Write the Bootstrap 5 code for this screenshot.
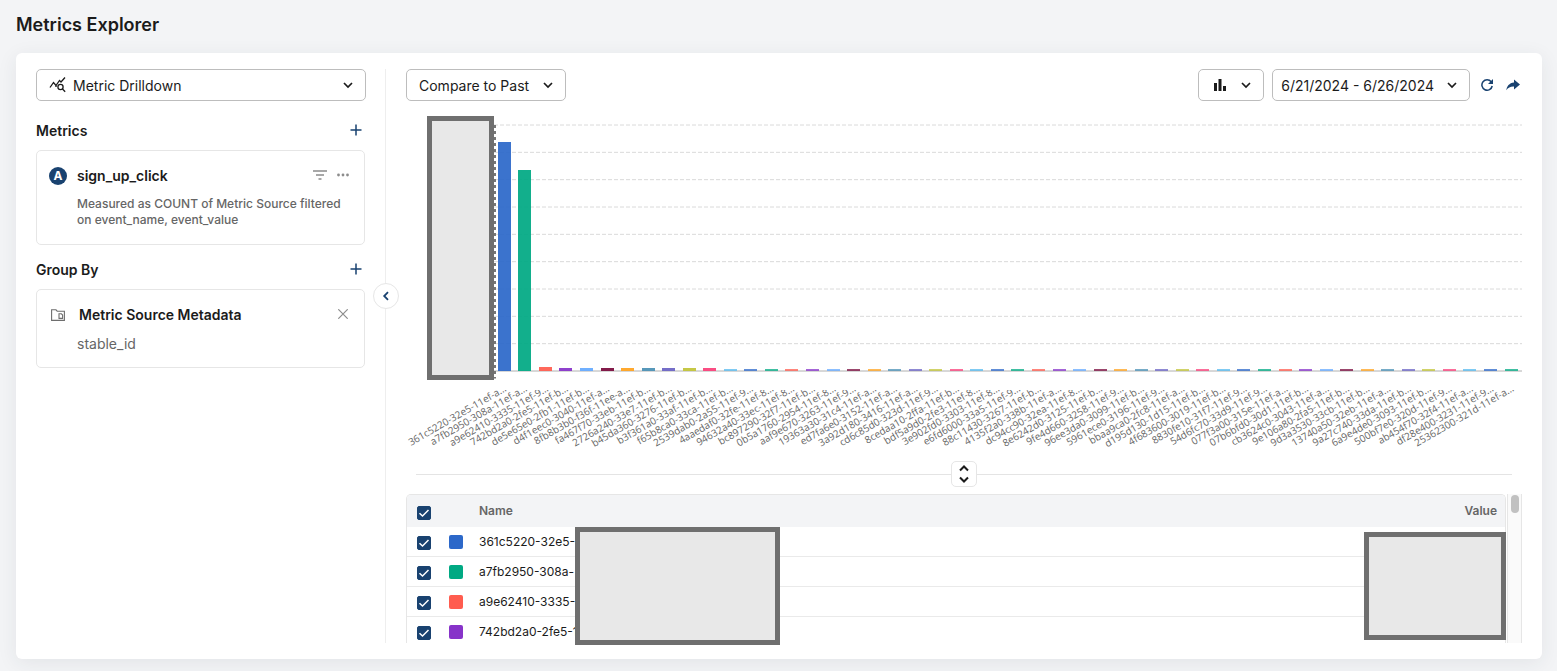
<!DOCTYPE html>
<html lang="en">
<head>
<meta charset="utf-8">
<meta name="viewport" content="width=device-width, initial-scale=1">
<title>Metrics Explorer</title>
<link rel="stylesheet" href="https://cdn.jsdelivr.net/npm/bootstrap@5.3.0/dist/css/bootstrap.min.css">
<style>
  body { font-family: Inter, "Liberation Sans", sans-serif; font-size: 14px; line-height: 20px; color: #1b1b1b; background: #f3f4f6; }
  .page { padding: 13px 15px 12px 16px; }
  .page-title { font-size: 18px; line-height: 24px; font-weight: 600; margin-bottom: 16px; }
  .panel { background: #fff; border-radius: 6px; padding: 16px 20px; box-shadow: 0 4px 20px rgba(40, 50, 60, .08); }
  .sidebar { width: 350px; padding-right: 19px; border-right: 1px solid #eee; flex: none; }
  .main { padding-left: 20px; min-width: 0; }
  .control { height: 32px; padding: 0 11px 0 12px; border: 1px solid #bdbdbd; border-radius: 5px; background: #fff; color: #1b1b1b; font-size: 14px; line-height: 20px; }
  .control svg, .icon-btn svg, .group svg { display: block; flex: none; }
  .control select { appearance: none; border: 0; background: transparent; color: inherit; font: inherit; padding: 2px 0 0; outline: 0; }
  .control span { padding-top: 2px; }
  .view-control { gap: 6px; }
  .compare-control { gap: 12px; }
  .type-control { gap: 14px; padding-left: 15px; }
  .date-control { gap: 12px; padding-left: 8px; }
  .toolbar-icons { gap: 13px; margin: 0 2px 0 3px; }
  .icon-btn { border: 0; background: none; padding: 0; color: #194270; line-height: 0; }
  .icon-btn.muted { color: #8c8c8c; }
  .section-title { font-size: 14px; line-height: 20px; font-weight: 600; margin: 0; }
  .section-row { padding-right: 4px; margin: 20px 0 9px; }
  .group + .section-row { margin-top: 15px; }
  .section-row .icon-btn, .group .icon-btn { padding-bottom: 2px; }
  .group { border: 1px solid #e6e6e6; border-radius: 5px; padding: 15px 12px 16px; margin-right: 1px; }
  .group-compact { padding-bottom: 13px; }
  .group-head { gap: 10px; padding-right: 3px; }
  .group-compact .group-head { gap: 14px; padding: 0 4px 0 2px; }
  .group-title { font-size: 14px; font-weight: 600; }
  .tag { width: 18px; height: 18px; border-radius: 50%; background: #194270; color: #fff; font-size: 12px; line-height: 18px; font-weight: 700; text-align: center; }
  .descr { font-size: 12px; line-height: 16px; font-weight: 500; color: #666; padding-left: 28px; margin: 10px 0 0; }
  .stable { line-height: 20px; color: #666; padding-left: 28px; margin-top: 9px; }
  .collapse-btn { position: absolute; right: -14px; top: 214px; width: 26px; height: 26px; border: 1px solid #e6e6e6; border-radius: 50%; background: #fff; color: #194270; padding: 0; }
  .redacted { background: #e8e8e8; border: 5px solid #6f6f6f; }
  .chart { margin: 15px 0 0 21px; }
  .axis-box { width: 67px; height: 264px; flex: none; }
  .plot-wrap { padding-top: 9px; min-width: 0; }
  .plot { height: 246px; position: relative; }
  .plot svg { position: absolute; inset: 0; width: 100%; height: 100%; overflow: visible; }
  .bars { position: relative; height: 100%; padding-right: 1px; }
  .slot { flex: 1 1 0; min-width: 0; }
  .bar { width: 13px; opacity: .93; }
  .bar.faint { opacity: .75; }
  .labels { height: 83px; margin-top: 19px; padding-right: 1px; clip-path: inset(0 0 0 -110px); }
  .labels .slot { position: relative; }
  .labels span { position: absolute; right: 9px; top: -9px; white-space: nowrap; font-family: "Open Sans", "Noto Sans", sans-serif; font-size: 10px; line-height: 12px; color: #666; transform: rotate(-30deg); transform-origin: 100% 50%; }
  .splitter { height: 26px; margin: -12px 10px 0; }
  .splitter::before, .splitter::after { content: ""; flex: 1; height: 1px; background: #e4e4e4; }
  .split-btn { width: 26px; height: 26px; border: 1px solid #e6e6e6; border-radius: 5px; background: #fff; padding: 0; color: #1b1b1b; }
  .split-btn svg, .collapse-btn svg { display: block; margin: auto; }
  .results { margin-top: 7px; }
  .scroll-area { height: 149px; overflow: hidden; border: 1px solid #e6e6e6; border-bottom: 0; border-radius: 5px 5px 0 0; }
  .data-grid { width: 100%; font-size: 12px; line-height: 16px; table-layout: fixed; border-collapse: separate; border-spacing: 0; }
  .data-grid th { height: 32px; background: #f3f4f6; color: #666; font-weight: 600; padding: 0; }
  .data-grid td { height: 30px; padding: 0; border-bottom: 1px solid #eaeaea; }
  .data-grid th:first-child, .data-grid td:first-child { padding-left: 10px; }
  .col-tick { width: 42px; }
  .col-swatch { width: 30px; }
  .col-value { width: 150px; }
  .tick { appearance: none; display: block; width: 14px; height: 14px; margin: 2px 0 0; border-radius: 2px; border: 1px solid #194270; background: #194270 url("data:image/svg+xml,%3Csvg xmlns='http://www.w3.org/2000/svg' viewBox='0 0 12 12'%3E%3Cpath d='M1.5 6.2 4.5 9 10.5 3' fill='none' stroke='white' stroke-width='1.5'/%3E%3C/svg%3E") center/12px; }
  th .tick { margin-top: 4px; }
  .swatch { width: 14px; height: 14px; border-radius: 2px; }
  .track { width: 15px; margin-left: 1px; border: solid #e6e6e6; border-width: 0 1px; background: #fafafa; flex: none; padding: 1px 3px; }
  .thumb { height: 18px; width: 8px; border-radius: 4px; background: #c1c1c1; }
  .name-mask { position: absolute; left: 169px; top: 33px; width: 205px; height: 118px; }
  .value-mask { position: absolute; right: 16px; top: 38px; width: 142px; height: 108px; }
</style>
</head>
<body>
<div class="page">
  <h1 class="page-title">Metrics Explorer</h1>
  <div class="panel d-flex">
    <aside class="sidebar position-relative">
      <label class="control view-control d-flex align-items-center">
        <svg width="18" height="18" viewBox="0 0 18 18" fill="none" stroke="#1b1b1b" stroke-width="1.3" aria-hidden="true"><path d="M1 11.5 4.5 6.5 7 9.5 10.5 4.5 12 6 16 1.5"/><circle cx="11.5" cy="11" r="2.6"/><path d="M13.5 13 16.2 15.7M7 9.5v1.5"/></svg>
        <select class="flex-fill" aria-label="View"><option>Metric Drilldown</option></select>
        <svg width="12" height="12" viewBox="0 0 12 12" fill="none" stroke="currentColor" stroke-width="1.7" aria-hidden="true"><path d="M2 4l4 4 4-4"/></svg>
      </label>
      <div class="section-row d-flex align-items-center justify-content-between">
        <h2 class="section-title">Metrics</h2>
        <button class="icon-btn" type="button" aria-label="Add metric"><svg width="12" height="12" viewBox="0 0 12 12" stroke="currentColor" stroke-width="1.5"><path d="M6 .5v11M.5 6h11"/></svg></button>
      </div>
      <section class="group">
        <div class="group-head d-flex align-items-center">
          <span class="tag">A</span>
          <span class="group-title flex-fill">sign_up_click</span>
          <button class="icon-btn muted" type="button" aria-label="Filter"><svg width="14" height="10" viewBox="0 0 14 10" stroke="currentColor" stroke-width="1.3"><path d="M0 1h14M3 5h8M5.500 9h3"/></svg></button>
          <button class="icon-btn muted" type="button" aria-label="More"><svg width="12" height="4" viewBox="0 0 12 4" fill="currentColor"><circle cx="1.500" cy="2" r="1.4"/><circle cx="6" cy="2" r="1.4"/><circle cx="10.500" cy="2" r="1.4"/></svg></button>
        </div>
        <p class="descr">Measured as COUNT of Metric Source filtered on event_name, event_value</p>
      </section>
      <div class="section-row d-flex align-items-center justify-content-between">
        <h2 class="section-title">Group By</h2>
        <button class="icon-btn" type="button" aria-label="Add grouping"><svg width="12" height="12" viewBox="0 0 12 12" stroke="currentColor" stroke-width="1.5"><path d="M6 .5v11M.5 6h11"/></svg></button>
      </div>
      <section class="group group-compact">
        <div class="group-head d-flex align-items-center">
          <svg width="14" height="12" viewBox="0 0 14 12" fill="none" stroke="#6e6e6e" stroke-width="1.1" aria-hidden="true"><path d="M.6 11.4V.8H5L6.2 2.2h7.2v9.2zM8 9.4V4.8h2.4l1.2 1.2v3.4z"/></svg>
          <span class="group-title flex-fill">Metric Source Metadata</span>
          <button class="icon-btn muted" type="button" aria-label="Remove"><svg width="10" height="10" viewBox="0 0 10 10" stroke="currentColor" stroke-width="1.2"><path d="M.3.3l9.4 9.4M9.7.3.3 9.7"/></svg></button>
        </div>
        <div class="stable">stable_id</div>
      </section>
      <button class="collapse-btn" type="button" aria-label="Collapse sidebar"><svg width="10" height="10" viewBox="0 0 10 10" fill="none" stroke="currentColor" stroke-width="1.8"><path d="M7 1.2 3.2 5 7 8.8"/></svg></button>
    </aside>

    <main class="main flex-fill">
      <div class="d-flex align-items-center gap-2">
        <label class="control compare-control d-flex align-items-center me-auto">
          <select aria-label="Comparison"><option>Compare to Past</option></select>
          <svg width="12" height="12" viewBox="0 0 12 12" fill="none" stroke="currentColor" stroke-width="1.7" aria-hidden="true"><path d="M2 4l4 4 4-4"/></svg>
        </label>
        <button class="control type-control d-flex align-items-center" type="button" aria-label="Chart type">
          <svg width="12" height="12" viewBox="0 0 12 12" fill="currentColor"><path d="M0 4h3v8H0zM4.500 0h3v12h-3zM9 7h3v5H9z"/></svg>
          <svg width="12" height="12" viewBox="0 0 12 12" fill="none" stroke="currentColor" stroke-width="1.7"><path d="M2 4l4 4 4-4"/></svg>
        </button>
        <button class="control date-control d-flex align-items-center" type="button">
          <span>6/21/2024 - 6/26/2024</span>
          <svg width="12" height="12" viewBox="0 0 12 12" fill="none" stroke="currentColor" stroke-width="1.7" aria-hidden="true"><path d="M2 4l4 4 4-4"/></svg>
        </button>
        <div class="toolbar-icons d-flex align-items-center">
          <button class="icon-btn" type="button" aria-label="Refresh"><svg width="12" height="12" viewBox="0 0 12 12" fill="none" stroke="currentColor" stroke-width="1.5"><path d="M10.2 2.8A5.2 5.2 0 1 0 11.2 7"/><path d="M12 0v5H7z" fill="currentColor" stroke="none"/></svg></button>
          <button class="icon-btn" type="button" aria-label="Share"><svg width="14" height="12" viewBox="0 0 14 12" fill="currentColor"><path d="M8 .5 14 5.5 8 10.5V7.6C4.5 7.4 2.2 8.700.3 11.3.8 7.5 3.2 3.9 8 3.5z"/></svg></button>
        </div>
      </div>

      <div class="chart d-flex">
        <div class="axis-box redacted"></div>
        <div class="plot-wrap flex-fill">
          <div class="plot">
            <svg id="grid" aria-hidden="true"></svg>
            <div class="bars d-flex align-items-end" id="bars"></div>
          </div>
          <div class="labels d-flex" id="labels"></div>
        </div>
      </div>

      <div class="splitter d-flex align-items-center">
        <button class="split-btn" type="button" aria-label="Resize"><svg width="12" height="20" viewBox="0 0 12 20" fill="none" stroke="currentColor" stroke-width="2"><path d="M2 6.5 6 2.5l4 4M2 13.5l4 4 4-4"/></svg></button>
      </div>

      <div class="results d-flex position-relative">
        <div class="scroll-area flex-fill">
          <table class="data-grid">
            <colgroup><col class="col-tick"><col class="col-swatch"><col><col class="col-value"></colgroup>
            <thead><tr><th><input class="tick" type="checkbox" checked aria-label="Select all"></th><th></th><th scope="col">Name</th><th scope="col" class="text-end pe-2">Value</th></tr></thead>
            <tbody id="rows"></tbody>
          </table>
        </div>
        <div class="track"><div class="thumb"></div></div>
        <div class="name-mask redacted"></div>
        <div class="value-mask redacted"></div>
      </div>
    </main>
  </div>
</div>
<script>
  const colors = ['#2c68c9', '#00a983', '#ff5c4f', '#8733c9', '#65aaff', '#7a0a3c', '#ffa31f', '#4a90b5', '#6a63c4', '#c2c438', '#fa3f7a', '#55b9ef'];
  const ids = `361c5220-32e5-11ef-a a7fb2950-308a-11ef-a a9e62410-3335-11ef-9 742bd2a0-2fe5-11ef-b de5e65e0-2fb1-11ef-b
    d4f1eec0-3040-11ef-a 8fb8b3b0-f36f-11ee-a fa467f70-33eb-11ef-b 2726a240-33e7-11ef-b b45da360-3276-11ef-b
    b3f361a0-33af-11ef-b f65b8ca0-33ca-11ef-b 2539dab0-2a55-11ef-9 4aaedaf0-32fe-11ef-8 94632a40-33ec-11ef-8
    bc897290-32f7-11ef-b 0b5a1760-2954-11ef-8 aaf9e670-3263-11ef-9 19363a30-31c4-11ef-a ed7fa6e0-3152-11ef-a
    3a92d180-3416-11ef-a cd6c85d0-323d-11ef-9 8cedaa10-2ffa-11ef-b bdf5a9d0-2fe3-11ef-8 3e902fd0-3303-11ef-8
    e6fd6000-33a5-11ef-9 88c11430-3267-11ef-b 4135f2a0-338b-11ef-a dc94cc90-32ea-11ef-8 8e6242d0-3125-11ef-b
    9fe4d660-3258-11ef-9 96ee3da0-3099-11ef-b 5961ece0-3196-11ef-9 bbaa9ca0-2fc8-11ef-a d195d130-1d15-11ef-b
    4f683600-3019-11ef-b 8830fe10-31f7-11ef-9 54d6fc70-33d9-11ef-9 077f3a00-315e-11ef-a 07b6bfd0-30d1-11ef-b
    cb3624c0-3043-11ef-a 9e106a80-2fa5-11ef-b 9d3a3530-33cb-11ef-b 13740a50-32eb-11ef-a 9a27c740-33da-11ef-b
    6a9e4de0-3093-11ef-b 500bf7e0-320d-11ef-9 ab454f70-32f4-11ef-a df28e400-3231-11ef-9 25362300-321d-11ef-a`.split(/\s+/);
  const height = i => i === 0 ? 229 : i === 1 ? 201 : i === 2 ? 4 : i < 11 ? 3 : 2;

  document.getElementById('bars').innerHTML = ids.map((id, i) =>
    `<div class="slot"><div class="bar mx-auto${i > 10 ? ' faint' : ''}" style="height:${height(i)}px;background:${colors[i % 12]}"></div></div>`).join('');
  document.getElementById('labels').innerHTML = ids.map(id => `<div class="slot"><span>${id}...</span></div>`).join('');

  // nine dashed value lines, then the baseline and the dashed value axis
  let lines = '';
  for (let n = 0; n < 9; n++) {
    const y = `${n * 100 / 9}%`;
    lines += `<line x1="0" x2="100%" y1="${y}" y2="${y}" stroke="#dadada" stroke-dasharray="4 2"/>`;
  }
  lines += '<line x1="0" x2="100%" y1="100%" y2="100%" stroke="#b0b0b0"/><line x1="1" x2="1" y1="0" y2="103%" stroke="#777" stroke-width="2" stroke-dasharray="3 3"/>';
  document.getElementById('grid').innerHTML = lines;

  document.getElementById('rows').innerHTML = ids.slice(0, 4).map((id, i) =>
    `<tr><td><input class="tick" type="checkbox" checked aria-label="Show series ${i + 1}"></td><td><div class="swatch" style="background:${colors[i]}"></div></td><td>${id.slice(0, i === 3 ? 15 : 14)}</td><td></td></tr>`).join('');
</script>
<script src="https://cdn.jsdelivr.net/npm/bootstrap@5.3.0/dist/js/bootstrap.bundle.min.js"></script>
</body>
</html>
